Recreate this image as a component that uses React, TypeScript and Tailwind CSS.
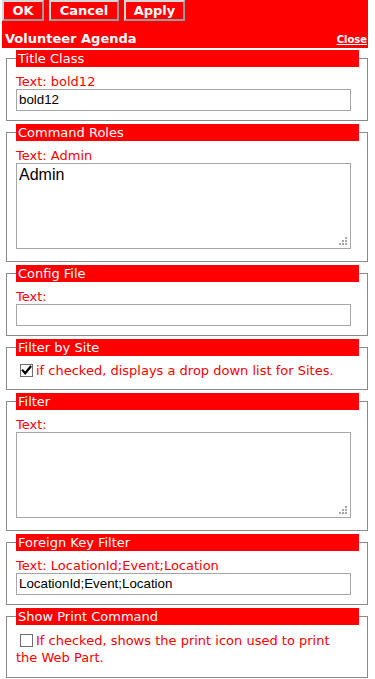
import React from "react";

const V = "font-['DejaVu_Sans',Verdana,sans-serif]";
const A = "font-['Liberation_Sans',Arial,sans-serif]";

function Grip() {
  return (
    <svg className="absolute right-[3px] bottom-[3px]" width="8" height="8" viewBox="0 0 8 8">
      <g fill="#a8a8a8">
        <rect x="6" y="0" width="2" height="2" />
        <rect x="3" y="3" width="2" height="2" />
        <rect x="6" y="3" width="2" height="2" />
        <rect x="0" y="6" width="2" height="2" />
        <rect x="3" y="6" width="2" height="2" />
        <rect x="6" y="6" width="2" height="2" />
      </g>
    </svg>
  );
}

function Box({ checked }: { checked: boolean }) {
  return (
    <span className="inline-block w-[13px] h-[13px] ml-[4px] mr-[3px] align-[-2px] border border-[#6e6e6e] bg-white relative">
      {checked && (
        <svg className="absolute left-0 top-0" width="11" height="11" viewBox="0 0 11 11">
          <path d="M1.8 5.6 L4.2 8.2 L9.4 1.8" fill="none" stroke="#000" strokeWidth="2.2" strokeLinecap="square" />
        </svg>
      )}
    </span>
  );
}

function Section({ title, children, pb }: { title: string; children: React.ReactNode; pb: string }) {
  return (
    <fieldset className={`w-[362px] ml-[6px] mb-[3px] border border-[#8a8a8a] pl-[9px] pr-[7px] ${pb}`}>
      <legend className={`${V} block w-[343px] h-[17px] bg-[#ff0000] text-white text-[13px] leading-[17px] pl-[2px]`}>
        {title}
      </legend>
      <div className="pt-[7px]">{children}</div>
    </fieldset>
  );
}

function Label({ text }: { text: string }) {
  return <div className={`${V} text-[13px] leading-[15px] text-[#ff0000]`}>{text}</div>;
}

function Input({ value }: { value: string }) {
  return (
    <div className={`${A} w-[335px] h-[22px] border border-[#a6a6a6] bg-white px-[2px] text-[13.33px] leading-[20px] text-black`}>
      {value}
    </div>
  );
}

function TextArea({ value }: { value: string }) {
  return (
    <div className={`${A} relative w-[335px] h-[86px] border border-[#a6a6a6] bg-white px-[2px] pt-[1px] text-[16px] leading-[20px] text-black`}>
      {value}
      <Grip />
    </div>
  );
}

function Btn({ label, w }: { label: string; w: string }) {
  return (
    <div
      className={`${V} ${w} h-[21px] flex items-center justify-center bg-[#ff0000] text-white font-bold text-[13px] border-2 border-t-[#d8d8d8] border-l-[#d8d8d8] border-r-[#9a9a9a] border-b-[#9a9a9a]`}
    >
      {label}
    </div>
  );
}

export default function App() {
  return (
    <div className="w-[375px] h-[679px] bg-white overflow-hidden">
      <div className="ml-[2px] w-[366px] h-[48px] bg-[#ff0000] flex flex-col">
        <div className="flex gap-[5px]">
          <Btn label="OK" w="w-[42px]" />
          <Btn label="Cancel" w="w-[70px]" />
          <Btn label="Apply" w="w-[61px]" />
        </div>
        <div className="flex-1 flex items-baseline justify-between pl-[3px] pr-[1px] pt-[10px]">
          <span className={`${V} text-white font-bold text-[13px] leading-[16px]`}>Volunteer Agenda</span>
          <span className={`${V} text-white font-bold text-[10px] leading-[12px] underline`}>Close</span>
        </div>
      </div>
      <div className="h-[2px]" />

      <Section title="Title Class" pb="pb-[9px]">
        <Label text="Text: bold12" />
        <Input value="bold12" />
      </Section>

      <Section title="Command Roles" pb="pb-[12px]">
        <Label text="Text: Admin" />
        <TextArea value="Admin" />
      </Section>

      <Section title="Config File" pb="pb-[9px]">
        <Label text="Text:" />
        <Input value="" />
      </Section>

      <Section title="Filter by Site" pb="pb-[11px]">
        <div className={`${V} text-[13px] leading-[15px] text-[#ff0000]`}>
          <Box checked />
          if checked, displays a drop down list for Sites.
        </div>
      </Section>

      <Section title="Filter" pb="pb-[12px]">
        <Label text="Text:" />
        <TextArea value="" />
      </Section>

      <Section title="Foreign Key Filter" pb="pb-[9px]">
        <Label text="Text: LocationId;Event;Location" />
        <Input value="LocationId;Event;Location" />
      </Section>

      <Section title="Show Print Command" pb="pb-[11px]">
        <div className={`${V} w-[330px] text-[13px] leading-[17px] text-[#ff0000]`}>
          <Box checked={false} />
          If checked, shows the print icon used to print the Web Part.
        </div>
      </Section>
    </div>
  );
}
